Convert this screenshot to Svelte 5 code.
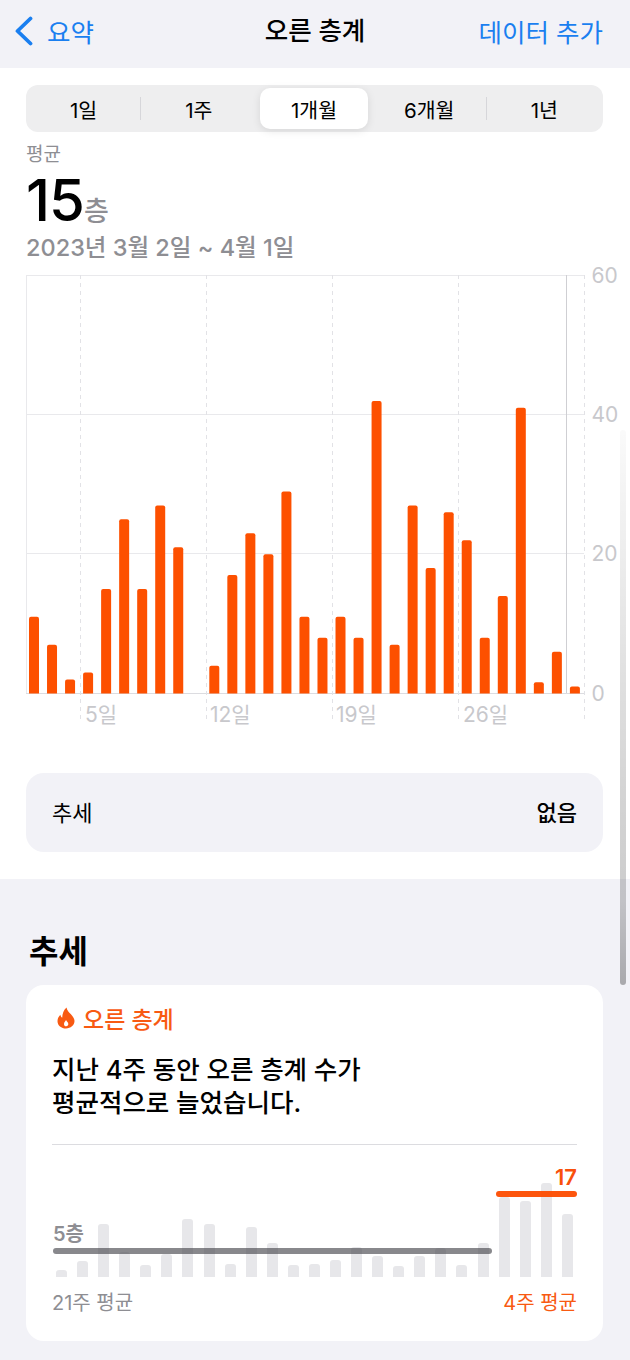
<script lang="ts">
    const tabs = ["1일", "1주", "1개월", "6개월", "1년"];
    const selected = 2;

    const daily = [11, 7, 2, 3, 15, 25, 15, 27, 21, 0, 4, 17, 23, 20, 29, 11, 8, 11, 8, 42, 7, 27, 18, 26, 22, 8, 14, 41, 1.6, 6, 1];
    const unit = 418 / 60;
    const yTicks = [60, 40, 20, 0];
    const xTicks = [
        { x: 54, label: "5일", at: 59 },
        { x: 180, label: "12일", at: 184 },
        { x: 306, label: "19일", at: 310 },
        { x: 432, label: "26일", at: 437 },
        { x: 558, label: "", at: 0 }
    ];

    // px heights of the weekly bars behind the average lines
    const weekly = [7, 16, 53, 25, 12, 23, 58, 53, 13, 50, 34, 12, 13, 17, 30, 21, 11, 21, 29, 12, 34, 80, 76, 94, 63];
</script>

<div class="page">
    <header class="nav">
        <div class="back">
            <svg width="20" height="30" viewBox="0 0 20 30">
                <path d="M15.500 2.500 2.500 15l13 12.500" fill="none" stroke="#1a7ff0" stroke-width="3.800" stroke-linecap="round" stroke-linejoin="round" />
            </svg>
            <span>요약</span>
        </div>
        <h1>오른 층계</h1>
        <span class="add">데이터 추가</span>
    </header>

    <main class="summary">
        <div class="segments">
            {#each tabs as tab, i}
                <div class="segment" class:active={i === selected} class:divided={i === 0 || i === 3}>{tab}</div>
            {/each}
        </div>

        <div class="label">평균</div>
        <div class="value"><strong>15</strong><span>층</span></div>
        <div class="range">2023년 3월 2일 ~ 4월 1일</div>

        <svg class="chart" width="604" height="460" viewBox="0 0 604 460">
            <g stroke="#e9e9ec" stroke-width="1">
                <line x1="0" x2="558" y1="0.5" y2="0.5" />
                <line x1="0" x2="558" y1="139.5" y2="139.5" />
                <line x1="0" x2="558" y1="278.5" y2="278.5" />
                <line x1="0" x2="558" y1="418.5" y2="418.5" stroke="#dcdce0" />
                <line x1="0.5" x2="0.5" y1="0" y2="418" />
            </g>
            {#each xTicks as tick}
                <line x1={tick.x + 0.5} x2={tick.x + 0.5} y1="0" y2="448" stroke="#e2e2e6" stroke-dasharray="4 4" />
            {/each}
            <line x1="540.5" x2="540.5" y1="0" y2="418" stroke="#cfcfd3" />

            {#each daily as v, i}
                {#if v > 0}
                    <path
                        d="M{3 + i * 18.03} 418.5v{-(v * unit - 2)}q0-2 2-2h6q2 0 2 2v{v * unit - 2}z"
                        fill="#fd5000"
                    />
                {/if}
            {/each}

            {#each yTicks as t, i}
                <text class="tick" x="565.5" y={i * 139.4 + 7.5}>{t}</text>
            {/each}
            {#each xTicks as tick}
                <text class="tick" x={tick.at} y="446.5">{tick.label}</text>
            {/each}
        </svg>

        <div class="trend-row">
            <span>추세</span>
            <b>없음</b>
        </div>
    </main>

    <section class="trends">
        <h2>추세</h2>
        <article class="card">
            <div class="card-title">
                <svg width="20" height="22" viewBox="0 0 20 22">
                    <path fill-rule="evenodd" d="M10.500 0.500c.6 3.200 2.400 4.600 4.200 6.600 1.900 2.100 3.800 4.200 3.800 7 0 4.400-3.900 7.400-8.500 7.400s-8.500-3-8.500-7.300c0-2.700 1.300-4.800 2.900-6.400.2 1.400.8 2.400 1.800 3 .1-4.400 1.500-7.800 4.300-10.300zM10 13c-.5 1.400-2 2.100-2 3.900 0 1.400 .9 2.300 2.200 2.300s2.100-.9 2.100-2.200c0-1.800-1.600-2.300-2.300-4z" fill="#f85a12" />
                </svg>
                <span>오른 층계</span>
            </div>
            <p>지난 4주 동안 오른 층계 수가<br />평균적으로 늘었습니다.</p>
            <div class="divider"></div>

            <div class="compare">
                <div class="weeks">
                    {#each weekly as h}
                        <div class="week" style="height: {h}px"></div>
                    {/each}
                </div>
                <div class="avg old">
                    <span>5층</span>
                </div>
                <div class="avg recent">
                    <span>17</span>
                </div>
            </div>

            <div class="legend">
                <span>21주 평균</span>
                <span class="now">4주 평균</span>
            </div>
        </article>
    </section>

    <div class="scrollbar"></div>
</div>

<style>
    :global(body) {
        margin: 0;
        background: #f2f2f7;
    }

    .page {
        width: 630px;
        height: 1360px;
        overflow: hidden;
        position: relative;
        background: #f2f2f7;
        font-family: Inter, "Noto Sans CJK KR", sans-serif;
        color: #000;
    }

    .nav {
        height: 68px;
        box-sizing: border-box;
        padding: 0 27px 6px 15px;
        display: flex;
        align-items: center;
        justify-content: space-between;
        font-size: 25.5px;
        position: relative;
    }

    .back {
        display: flex;
        align-items: center;
        gap: 12px;
        color: #1a7ff0;
    }

    .back svg {
        display: block;
    }

    .back span,
    .add {
        position: relative;
        top: -1px;
    }

    .nav h1 {
        position: absolute;
        left: 0;
        right: 0;
        top: 12px;
        margin: 0;
        text-align: center;
        font-size: 25.5px;
        line-height: 38px;
        font-weight: 500;
    }

    .add {
        color: #1a7ff0;
    }

    .summary {
        background: #fff;
        height: 811px;
        box-sizing: border-box;
        padding: 17px 27px 0 26px;
    }

    .segments {
        height: 47px;
        border-radius: 12px;
        background: #eeeeef;
        display: grid;
        grid-template-columns: repeat(5, 1fr);
        padding: 3px 1px 3px 0;
        box-sizing: border-box;
    }

    .segment {
        display: flex;
        align-items: center;
        justify-content: center;
        font-size: 20.5px;
        border-radius: 10px;
        position: relative;
    }

    .segment.active {
        background: #fff;
        box-shadow: 0 2px 8px rgba(0, 0, 0, 0.1);
        margin: 0 4px;
    }

    .segment.divided::after {
        content: "";
        position: absolute;
        right: 0;
        top: 9px;
        bottom: 9px;
        width: 1px;
        background: #d6d6da;
    }

    .label {
        margin-top: 10px;
        height: 26px;
        line-height: 26px;
        font-size: 19px;
        color: #8e8e93;
    }

    .value {
        margin-top: 2px;
        height: 60px;
        display: flex;
        align-items: baseline;
        line-height: 60px;
    }

    .value strong {
        font-size: 58px;
        font-weight: 500;
        letter-spacing: -1px;
    }

    .value span {
        font-size: 27px;
        color: #8e8e93;
        font-weight: 500;
    }

    .range {
        height: 45px;
        line-height: 36px;
        font-size: 23.5px;
        font-weight: 500;
        color: #8e8e93;
    }

    .chart {
        display: block;
        overflow: visible;
    }

    .tick {
        font-size: 21px;
        fill: #c8c8cc;
    }

    .trend-row {
        margin-top: 38px;
        width: 577px;
        height: 79px;
        box-sizing: border-box;
        padding: 0 26px 3px;
        border-radius: 18px;
        background: #f2f2f7;
        display: flex;
        align-items: center;
        justify-content: space-between;
        font-size: 22px;
    }

    .trend-row b {
        font-weight: 500;
    }

    .trends {
        padding: 50px 27px 0 26px;
    }

    .trends h2 {
        margin: 0 0 10px 3px;
        font-size: 32px;
        line-height: 46px;
        font-weight: 600;
    }

    .card {
        height: 356px;
        box-sizing: border-box;
        padding: 17px 26px 0;
        background: #fff;
        border-radius: 18px;
    }

    .card-title {
        display: flex;
        align-items: center;
        gap: 7px;
        height: 32px;
        padding-left: 4px;
        color: #f85a12;
        font-size: 23px;
        font-weight: 500;
    }

    .card p {
        margin: 19px 0 0;
        font-size: 25.5px;
        line-height: 33px;
        font-weight: 500;
    }

    .divider {
        margin-top: 25px;
        height: 1px;
        background: #dcdce0;
    }

    .compare {
        position: relative;
        height: 132px;
    }

    .weeks {
        position: absolute;
        inset: 0;
        display: flex;
        align-items: flex-end;
        justify-content: space-between;
        padding: 0 4px;
    }

    .week {
        width: 11px;
        border-radius: 3px 3px 0 0;
        background: #e7e7ea;
    }

    .avg {
        position: absolute;
        height: 6px;
        border-radius: 3px;
    }

    .avg span {
        position: absolute;
        bottom: 6px;
        font-weight: 600;
        line-height: 28px;
    }

    .avg.old {
        left: 1px;
        width: 439px;
        top: 103px;
        background: rgba(80, 80, 86, 0.68);
    }

    .avg.old span {
        left: 0;
        font-size: 20px;
        color: #8e8e93;
    }

    .avg.recent {
        right: 0;
        width: 81px;
        top: 46px;
        background: rgba(253, 76, 0, 0.95);
    }

    .avg.recent span {
        right: 0;
        font-size: 22px;
        color: #f9500c;
    }

    .legend {
        margin-top: 12px;
        display: flex;
        justify-content: space-between;
        font-size: 20px;
        line-height: 28px;
        color: #8e8e93;
    }

    .legend .now {
        color: #f85a12;
    }

    /* iOS scroll indicator, fading out towards its top end */
    .scrollbar {
        position: absolute;
        right: 4px;
        top: 430px;
        width: 6px;
        height: 555px;
        border-radius: 3px;
        background: linear-gradient(to bottom, rgba(0, 0, 0, 0.02), rgba(0, 0, 0, 0.17) 65%, rgba(0, 0, 0, 0.2) 85%, rgba(0, 0, 0, 0.3));
    }
</style>
